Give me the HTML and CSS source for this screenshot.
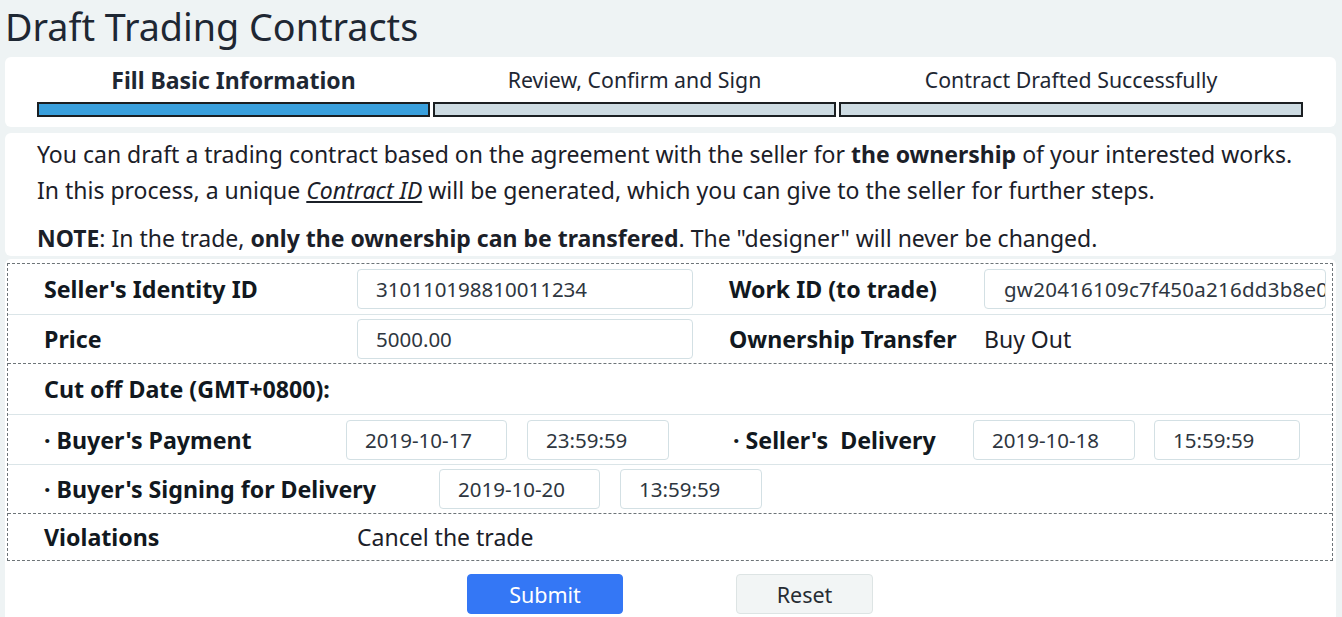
FILE: index.html
```html
<!DOCTYPE html>
<html lang="en">
<head>
<meta charset="utf-8">
<title>Draft Trading Contracts</title>
<link rel="stylesheet" href="styles.css">
</head>
<body>
<h1 class="title">Draft Trading Contracts</h1>

<section class="steps">
  <div class="step step-1">
    <div class="step-label active">Fill Basic Information</div>
    <div class="step-bar done"></div>
  </div>
  <div class="step step-2">
    <div class="step-label">Review, Confirm and Sign</div>
    <div class="step-bar"></div>
  </div>
  <div class="step step-3">
    <div class="step-label">Contract Drafted Successfully</div>
    <div class="step-bar"></div>
  </div>
</section>

<section class="info">
  <p>You can draft a trading contract based on the agreement with the seller for <b>the ownership</b> of your interested works.</p>
  <p>In this process, a unique <i class="u">Contract ID</i> will be generated, which you can give to the seller for further steps.</p>
  <p class="note"><b>NOTE</b>: In the trade, <b>only the ownership can be transfered</b>. The "designer" will never be changed.</p>
</section>

<section class="form-panel">
  <div class="form-box">
    <div class="group">
      <div class="row pair r1">
        <div class="label">Seller's Identity ID</div>
        <div class="field"><span class="input wide">310110198810011234</span></div>
        <div class="label">Work ID (to trade)</div>
        <div class="field"><span class="input wide clip">gw20416109c7f450a216dd3b8e06</span></div>
      </div>
      <div class="row pair r2">
        <div class="label">Price</div>
        <div class="field"><span class="input wide">5000.00</span></div>
        <div class="label">Ownership Transfer</div>
        <div class="field value">Buy Out</div>
      </div>
    </div>
    <div class="group">
      <div class="row r3">
        <div class="label">Cut off Date (GMT+0800):</div>
      </div>
      <div class="row dates r4">
        <div class="half">
          <div class="label sub lbl-pay">· Buyer's Payment</div>
          <span class="input date">2019-10-17</span>
          <span class="input time">23:59:59</span>
        </div>
        <div class="half right">
          <div class="label sub lbl-del">· Seller's&nbsp; Delivery</div>
          <span class="input date d2">2019-10-18</span>
          <span class="input time t2">15:59:59</span>
        </div>
      </div>
      <div class="row dates r5">
        <div class="half">
          <div class="label sub lbl-sign">· Buyer's Signing for Delivery</div>
          <span class="input date">2019-10-20</span>
          <span class="input time">13:59:59</span>
        </div>
      </div>
    </div>
    <div class="group last">
      <div class="row pair r6">
        <div class="label">Violations</div>
        <div class="field value">Cancel the trade</div>
      </div>
    </div>
  </div>
  <div class="actions">
    <button class="btn primary" type="button">Submit</button>
    <button class="btn reset" type="button">Reset</button>
  </div>
</section>
</body>
</html>
```

FILE: styles.css
```css
* { box-sizing: border-box; }

body {
  margin: 0;
  background: #eef3f4;
  font-family: "Noto Sans", Lato, "Liberation Sans", sans-serif;
  color: #1a1f26;
}

.title {
  margin: 0;
  padding: 4px 0 0 5px;
  height: 57px;
  font-size: 37.7px;
  font-weight: 400;
  line-height: 46px;
  color: #1e2733;
}

.steps {
  margin: 0 6px 0 5px;
  height: 70px;
  background: #fff;
  border-radius: 6px;
  display: flex;
  gap: 3px;
  padding: 8px 0 0 32px;
}

.step { display: flex; flex-direction: column; align-items: stretch; }
.step-1 { width: 393px; }
.step-2 { width: 403px; }
.step-3 { width: 464px; }

.step-label {
  text-align: center;
  font-size: 21.3px;
  line-height: 30px;
  height: 37px;
  color: #1e2733;
  white-space: nowrap;
}
.step-label.active { font-weight: 700; font-size: 23px; }

.step-bar {
  height: 15px;
  border: 2px solid #1b1f22;
  background: #cddbe2;
}
.step-bar.done { background: #3aa0dd; }

.info {
  margin: 6px 6px 0 5px;
  height: 123px;
  background: #fff;
  border-radius: 6px;
  padding: 3px 0 0 32px;
  font-size: 23px;
  color: #1b2028;
  white-space: nowrap;
}
.info p { margin: 0; line-height: 36px; }
.info p.note { margin-top: 12px; }
.info .u { text-decoration: underline; }

.form-panel {
  margin: 3px 6px 0 5px;
  background: #fff;
  border-radius: 6px 6px 0 0;
  padding: 4px 3px 10px 2px;
  height: 360px;
}

.form-box {
  border: 1px dashed #6d7478;
}
.group { border-bottom: 1px dashed #6d7478; }
.group.last { border-bottom: none; }

.row {
  display: flex;
  align-items: center;
  padding-left: 36px;
  border-bottom: 1px solid #dbe5e8;
  white-space: nowrap;
}
.row:last-child { border-bottom: none; }

.r1 { height: 51px; }
.r2 { height: 48px; }
.r3 { height: 51px; }
.r4 { height: 50px; }
.r5 { height: 48px; }
.r6 { height: 46px; }

.label {
  font-size: 23.2px;
  font-weight: 700;
  color: #111820;
  flex-shrink: 0;
}
.pair > .label { width: 313px; }
.pair > .label:nth-child(3) { width: 255px; padding-left: 59px; box-sizing: content-box; }
.pair .field { width: 313px; flex-shrink: 0; }

.value { font-size: 23px; color: #1b2028; }

.input {
  display: inline-flex;
  align-items: center;
  flex-shrink: 0;
  height: 40px;
  border: 1px solid #d3e0e4;
  border-radius: 4px;
  padding-left: 18px;
  font-size: 20.5px;
  color: #2e3640;
  white-space: nowrap;
  overflow: hidden;
}
.input.wide { width: 336px; }
.input.clip { width: 342px; padding-left: 19px; letter-spacing: 0.25px; }

.half { display: flex; align-items: center; flex-shrink: 0; }
.half:first-child { width: 687px; }
.lbl-pay { width: 302px; }
.lbl-del { width: 242px; padding-left: 2px; }
.lbl-sign { width: 395px; }
.input.date { width: 161px; margin-right: 20px; }
.input.time { width: 142px; }
.input.d2 { width: 162px; margin-right: 19px; }
.input.t2 { width: 146px; }

.actions {
  display: flex;
  padding: 13px 0 0 460px;
  gap: 113px;
}
.btn {
  height: 40px;
  width: 156px;
  border-radius: 4px;
  border: 1px solid #dde4e4;
  background: #f2f5f5;
  font-family: inherit;
  font-size: 21.5px;
  color: #262c33;
  padding: 0;
}
.btn.primary {
  background: #3477f5;
  border-color: #3477f5;
  color: #fff;
}
.btn.reset { width: 137px; }
```
